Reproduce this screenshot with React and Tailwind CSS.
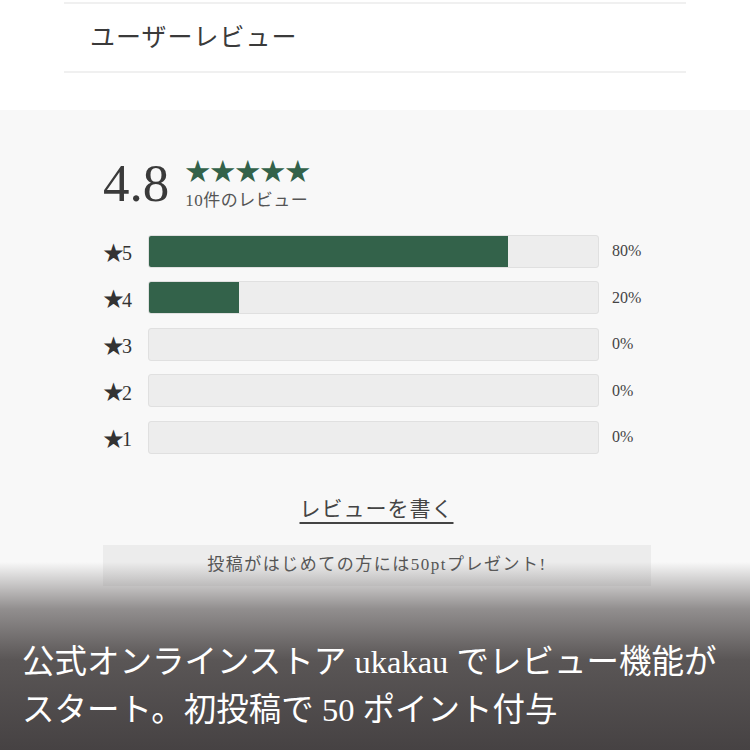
const serif = { fontFamily: '"Liberation Serif", "Noto Sans CJK JP", serif' };

const rows = [
  { star: 5, pct: 80 },
  { star: 4, pct: 20 },
  { star: 3, pct: 0 },
  { star: 2, pct: 0 },
  { star: 1, pct: 0 },
];

export default function App() {
  return (
    <div
      className="relative w-[750px] h-[750px] overflow-hidden bg-white flex flex-col text-[#333]"
      style={serif}
    >
      {/* HEADER */}
      <div className="pt-[2px] px-[64px]">
        <div className="h-[71px] border-t-2 border-b-2 border-[#f0f0f0] flex items-center pl-[26px]">
          <h2 className="text-[25px] text-[#3a3a3a] tracking-[1px]">ユーザーレビュー</h2>
        </div>
      </div>
      <div className="h-[37px]" />

      {/* REVIEW SUMMARY */}
      <div className="flex-1 bg-[#f8f8f8] pt-[36px] pl-[103px]">
        <div className="flex items-end gap-[16px] h-[62px]">
          <span className="text-[53px] leading-none text-[#3a3a3a] mb-[-2px]">4.8</span>
          <div className="flex flex-col mb-[-1px]">
            <span className="text-[25px] leading-none text-[#33624a]">★★★★★</span>
            <span className="text-[17px] leading-none text-[#555] mt-[8px] tracking-[0.5px]">10件のレビュー</span>
          </div>
        </div>

        <div className="flex flex-col gap-[14.5px] mt-[27px]">
          {rows.map((r) => (
            <div key={r.star} className="flex items-center h-[32px]">
              <span className="w-[45px] text-[20px] leading-none text-[#333] flex items-center pt-[4px]">
                <span className="text-[21px] tracking-[-2px]">★</span>
                {r.star}
              </span>
              <div className="w-[451px] h-[33px] rounded-[3px] bg-[#ededed] border border-[#e0e0e0] overflow-hidden">
                <div className="h-full bg-[#33624a]" style={{ width: `${r.pct}%` }} />
              </div>
              <span className="ml-[13px] text-[16px] text-[#444]">{r.pct}%</span>
            </div>
          ))}
        </div>

        <div className="w-[547px] flex justify-center mt-[41px]">
          <span className="text-[21px] text-[#444] underline decoration-[2px] underline-offset-[6px] tracking-[1px]">
            レビューを書く
          </span>
        </div>

        <div className="w-[548px] h-[41px] mt-[19px] bg-[#ececec] flex items-center justify-center">
          <span className="text-[17px] text-[#555] tracking-[1.5px]">投稿がはじめての方には50ptプレゼント!</span>
        </div>
      </div>

      {/* CAPTION OVERLAY */}
      <div
        className="absolute left-0 bottom-0 w-full h-[188px] pl-[22px] pt-[76px]"
        style={{
          background:
            "linear-gradient(to bottom, rgba(71,67,68,0) 0%, rgba(120,116,116,0.8) 25%, #5a5656 52%, #464243 100%)",
        }}
      >
        <p className="text-[32.5px] leading-[48px] text-white whitespace-nowrap">
          公式オンラインストア ukakau でレビュー機能が
          <br />
          スタート。初投稿で 50 ポイント付与
        </p>
      </div>
    </div>
  );
}
